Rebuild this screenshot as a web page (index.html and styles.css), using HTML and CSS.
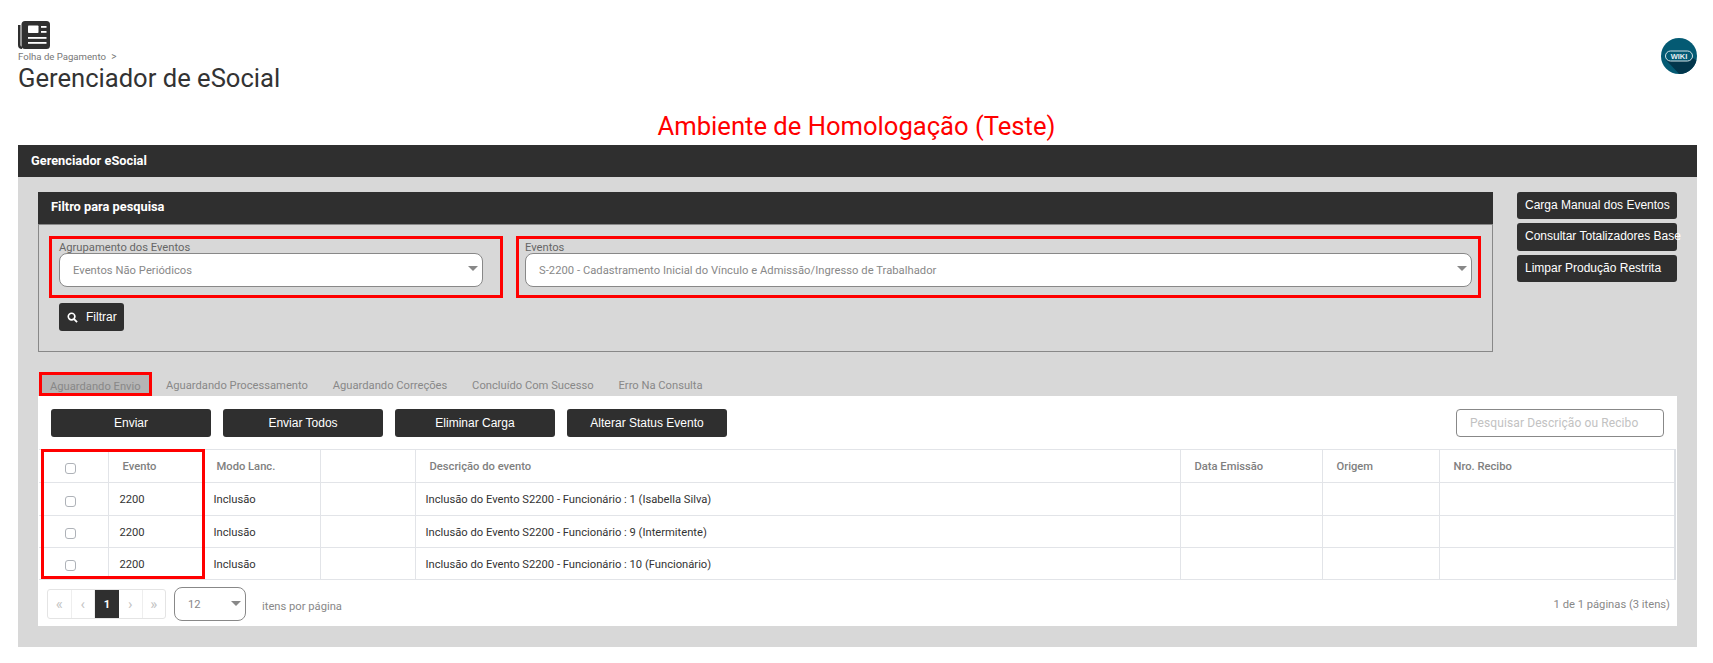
FILE: index.html
```html
<!DOCTYPE html>
<html lang="pt-BR">
<head>
<meta charset="utf-8">
<title>Gerenciador de eSocial</title>
<link rel="stylesheet" href="styles.css">
</head>
<body>
<header class="top">
  <div class="top-left">
    <svg class="news-icon" viewBox="0 0 32 28" aria-hidden="true">
      <path fill="#2f2f2f" d="M0 4h2.5v20a1.5 1.5 0 0 0 1.5 1.5V28A4 4 0 0 1 0 24z"/>
      <rect x="3.5" y="0" width="28.5" height="28" rx="3.5" fill="#2f2f2f"/>
      <rect x="10" y="4.5" width="10.5" height="7.5" rx=".8" fill="#fff"/>
      <rect x="23" y="5" width="5.5" height="1.8" fill="#fff"/>
      <rect x="23" y="10" width="5.5" height="1.8" fill="#fff"/>
      <rect x="10" y="16" width="18.5" height="1.8" fill="#fff"/>
      <rect x="10" y="21" width="18.5" height="1.8" fill="#fff"/>
    </svg>
    <div class="crumb">Folha de Pagamento <span class="crumb-sep">&gt;</span></div>
    <h1 class="title">Gerenciador de eSocial</h1>
  </div>
  <svg class="wiki" viewBox="0 0 36 36" aria-hidden="true">
    <defs><clipPath id="wc"><circle cx="18" cy="18" r="18"/></clipPath></defs>
    <circle cx="18" cy="18" r="18" fill="#045a73"/>
    <polygon clip-path="url(#wc)" points="5,22 32,20 40,26 40,40 22,40" fill="#02364c"/>
    <rect x="4.5" y="13" width="27" height="10" rx="5" fill="#045a73" stroke="#d5e3e8" stroke-width="1"/>
    <text x="18" y="20.8" text-anchor="middle" class="wiki-text">WIKI</text>
  </svg>
</header>

<div class="banner">Ambiente de Homologação (Teste)</div>

<main class="card">
  <div class="card-head">Gerenciador eSocial</div>
  <div class="card-body">
    <div class="filter-row">
      <section class="filter">
        <div class="filter-head">Filtro para pesquisa</div>
        <div class="filter-body">
          <div class="fields">
            <div class="field field-a">
              <label class="field-label">Agrupamento dos Eventos</label>
              <div class="select select-wide"><span>Eventos Não Periódicos</span><i class="caret"></i></div>
            </div>
            <div class="field field-b">
              <label class="field-label">Eventos</label>
              <div class="select select-wide"><span>S-2200 - Cadastramento Inicial do Vínculo e Admissão/Ingresso de Trabalhador</span><i class="caret"></i></div>
            </div>
          </div>
          <button class="btn btn-filter" type="button">
            <svg class="search-icon" viewBox="0 0 12 12" aria-hidden="true"><circle cx="5" cy="5" r="3.6" fill="none" stroke="#fff" stroke-width="1.8"/><path d="M7.7 7.7 11 11" stroke="#fff" stroke-width="2"/></svg>
            Filtrar
          </button>
        </div>
      </section>
      <aside class="side">
        <button class="btn btn-side" type="button">Carga Manual dos Eventos</button>
        <button class="btn btn-side btn-side-tall" type="button">Consultar Totalizadores Base</button>
        <button class="btn btn-side" type="button">Limpar Produção Restrita</button>
      </aside>
    </div>

    <nav class="tabs">
      <span class="tab tab-active">Aguardando Envio</span>
      <span class="tab">Aguardando Processamento</span>
      <span class="tab">Aguardando Correções</span>
      <span class="tab">Concluído Com Sucesso</span>
      <span class="tab">Erro Na Consulta</span>
    </nav>

    <section class="panel">
      <div class="toolbar">
        <button class="btn btn-action" type="button">Enviar</button>
        <button class="btn btn-action" type="button">Enviar Todos</button>
        <button class="btn btn-action" type="button">Eliminar Carga</button>
        <button class="btn btn-action" type="button">Alterar Status Evento</button>
        <input class="search" type="text" placeholder="Pesquisar Descrição ou Recibo">
      </div>
      <div class="table-wrap">
        <table class="grid">
          <colgroup>
            <col class="c-check"><col class="c-event"><col class="c-mode"><col class="c-empty"><col class="c-desc"><col class="c-date"><col class="c-origin"><col class="c-receipt">
          </colgroup>
          <thead>
            <tr>
              <th class="cell-check"><input type="checkbox"></th>
              <th>Evento</th><th>Modo Lanc.</th><th></th><th>Descrição do evento</th><th>Data Emissão</th><th>Origem</th><th>Nro. Recibo</th>
            </tr>
          </thead>
          <tbody>
            <tr class="row-tall">
              <td class="cell-check"><input type="checkbox"></td>
              <td>2200</td><td>Inclusão</td><td></td><td>Inclusão do Evento S2200 - Funcionário : 1 (Isabella Silva)</td><td></td><td></td><td></td>
            </tr>
            <tr>
              <td class="cell-check"><input type="checkbox"></td>
              <td>2200</td><td>Inclusão</td><td></td><td>Inclusão do Evento S2200 - Funcionário : 9 (Intermitente)</td><td></td><td></td><td></td>
            </tr>
            <tr>
              <td class="cell-check"><input type="checkbox"></td>
              <td>2200</td><td>Inclusão</td><td></td><td>Inclusão do Evento S2200 - Funcionário : 10 (Funcionário)</td><td></td><td></td><td></td>
            </tr>
          </tbody>
        </table>
        <div class="table-mark"></div>
      </div>
      <div class="pager-row">
        <div class="pager">
          <span class="page page-off">«</span><span class="page page-off">‹</span><span class="page page-on">1</span><span class="page page-off">›</span><span class="page page-off">»</span>
        </div>
        <div class="select select-size"><span>12</span><i class="caret"></i></div>
        <span class="per-page">itens por página</span>
        <span class="page-info">1 de 1 páginas (3 itens)</span>
      </div>
    </section>
  </div>
</main>
</body>
</html>
```
FILE: styles.css
```css
* { box-sizing: border-box; }
html, body { margin: 0; padding: 0; }
body { background: #fff; font-family: Roboto, "Liberation Sans", sans-serif; color: #333; font-size: 11.2px; overflow: hidden; }

.top { display: flex; justify-content: space-between; align-items: flex-start; padding: 21px 16px 0 18px; height: 111px; }
.news-icon { display: block; width: 32px; height: 28px; }
.crumb { font-size: 9.6px; line-height: 12px; color: #777; margin-top: 2px; height: 12px; }
.crumb-sep { margin-left: 3px; font-size: 10px; }
.title { margin: 0; font-size: 25.6px; font-weight: 400; line-height: 30px; color: #333; }
.wiki { width: 36px; height: 36px; margin-top: 17px; }
.wiki-text { font-family: "Liberation Sans", sans-serif; font-size: 7.5px; font-weight: 700; fill: #e6eff2; }

.banner { height: 34px; line-height: 30px; text-align: center; font-size: 25.6px; color: #f00; }

.card { margin: 0 16px 0 18px; background: #d8d8d8; height: 502px; }
.card-head { height: 32px; line-height: 31px; padding-left: 13px; background: #2f2f2f; color: #fff; font-weight: 700; font-size: 12.8px; }
.card-body { padding: 15px 20px 21px; }

.filter-row { display: flex; gap: 24px; }
.filter { width: 1455px; }
.filter-head { height: 32px; line-height: 30px; padding-left: 13px; background: #2f2f2f; color: #fff; font-weight: 700; font-size: 12.8px; }
.filter-body { height: 128px; border: 1px solid #888; padding: 11px 0 0 10px; }
.fields { display: flex; gap: 13px; }
.field { border: 3px solid #f00; height: 62px; padding: 1px 0 0 7px; }
.field-a { width: 454px; padding-right: 17px; }
.field-b { width: 965px; padding-left: 6px; padding-right: 6px; }
.field-label { display: block; font-size: 11.2px; line-height: 13px; padding-top: 1px; height: 13px; color: #666; }
.select { position: relative; background: #fff; border: 1px solid #888; border-radius: 8px; display: flex; align-items: center; color: #888; font-size: 11.2px; letter-spacing: .04px; }
.select-wide { height: 34px; padding-left: 13px; }
.caret { position: absolute; right: 4px; top: 12px; border-left: 5.5px solid transparent; border-right: 5.5px solid transparent; border-top: 5px solid #888; }

.btn { border: 0; margin: 0; background: #2f2f2f; color: #fff; border-radius: 3px; font-family: "Liberation Sans", Arial, sans-serif; font-size: 12px; font-weight: 400; cursor: pointer; white-space: nowrap; }
.btn-filter { display: flex; align-items: center; gap: 8px; margin: 5px 0 0 10px; width: 65px; height: 28px; padding: 0 0 0 8px; }
.search-icon { width: 11px; height: 11px; }

.side { display: flex; flex-direction: column; gap: 4px; width: 160px; }
.btn-side { height: 27px; width: 160px; text-align: left; padding: 0 0 1px 8px; }
.btn-side-tall { height: 28px; padding-bottom: 3px; }

.tabs { display: flex; height: 24px; margin-top: 20px; padding-left: 1px; align-items: stretch; color: #888; font-size: 11.2px; }
.tab { padding: 3px 12.4px 0; line-height: 22px; }
.tab-active { border: 3px solid #f00; background: #b5b5b5; padding: 1px 8px 0 8px; line-height: 21px; margin-right: 2px; }

.panel { background: #fff; height: 230px; }
.toolbar { display: flex; gap: 12px; padding: 13px 13px 12px; height: 53px; }
.btn-action { width: 160px; height: 28px; padding-bottom: 1px; }
.search { margin-left: auto; width: 208px; height: 28px; border: 1px solid #888; border-radius: 4px; padding: 0 0 0 13px; font: 12px Roboto, sans-serif; letter-spacing: .1px; outline: 0; }
.search::placeholder { color: #c2c2c2; opacity: 1; }

.table-wrap { position: relative; margin: 0 2px 0 1px; }
.grid { width: 1636px; table-layout: fixed; border-collapse: collapse; font-size: 11.2px; }
.c-check { width: 69px; } .c-event { width: 96px; } .c-mode { width: 116px; } .c-empty { width: 95px; }
.c-desc { width: 765px; } .c-date { width: 142px; } .c-origin { width: 117px; } .c-receipt { width: 236px; }
.grid th, .grid td { border: 1px solid #e2e4e8; height: 33px; padding: 0 0 0 10px; text-align: left; color: #333; }
.grid td:nth-child(2) { padding-left: 11px; }
.grid td:nth-child(3) { padding-left: 9px; }
.grid th { padding-left: 14px; color: #808080; font-weight: 500; }
.grid th:nth-child(3) { padding-left: 12px; }
.grid tbody tr td { height: 32px; padding-top: 2px; }
.grid tbody .row-tall td { height: 33px; padding-top: 0; }
.grid th:first-child, .grid td:first-child { border-left: 0; }
.grid th:last-child, .grid td:last-child { border-right: 2px solid #dde0e5; }
.grid .cell-check, .grid tbody tr .cell-check { padding: 4px 0 0 26px; }
.cell-check input { display: block; appearance: none; margin: 0; width: 11px; height: 11px; border: 1px solid #aeb2b8; border-radius: 3px; background: #fff; }
.table-mark { position: absolute; left: 2px; top: 0; width: 164px; height: 130px; border: 3px solid #f00; pointer-events: none; }

.pager-row { display: flex; align-items: center; padding: 7px 7px 0 9px; }
.pager { display: flex; height: 30px; width: 119px; border: 1px solid #e4e4e4; border-radius: 3px; color: #c4c4c4; }
.page { flex: 1; display: flex; align-items: center; justify-content: center; font-size: 15px; border-right: 1px solid #eee; }
.page:last-child { border-right: 0; }
.page-on { flex: 0 0 24px; background: #2f2f2f; color: #fff; font-weight: 700; font-size: 11.2px; border-right: 0; }
.select-size { width: 72px; height: 34px; margin-left: 8px; padding-left: 13px; }
.select-size .caret { right: 4px; top: 13px; }
.per-page { margin-left: 16px; color: #888; padding-top: 5px; }
.page-info { margin-left: auto; color: #888; }
```
